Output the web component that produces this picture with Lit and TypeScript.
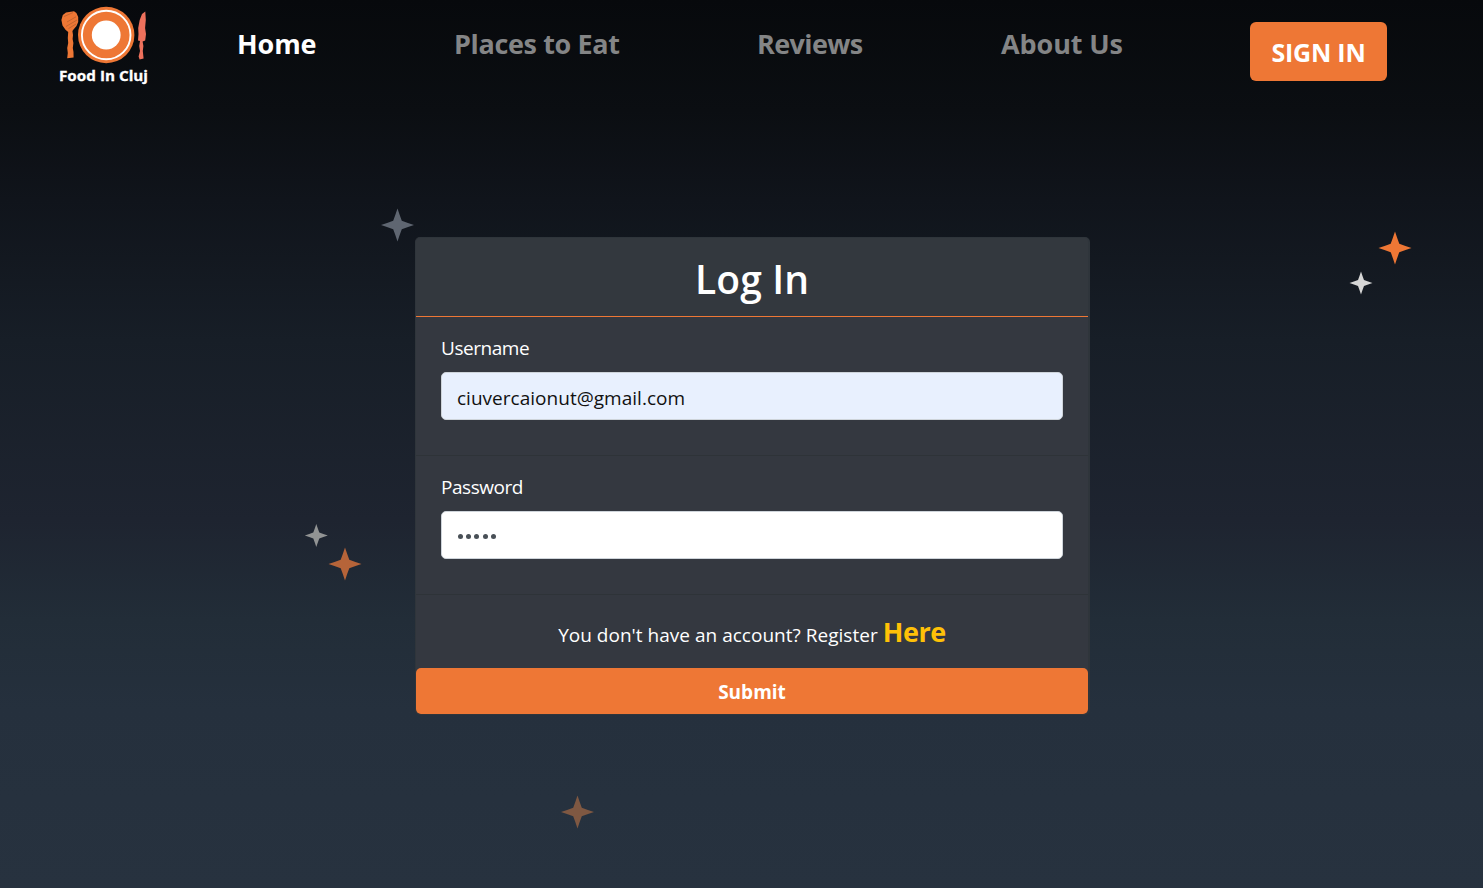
import { LitElement, html, css, svg } from "lit";
import { customElement } from "lit/decorators.js";

interface Star { x: number; y: number; r: number; color: string; }

const STARS: Star[] = [
  { x: 397.5, y: 225, r: 16.5, color: "#5f6671" },
  { x: 1395, y: 248, r: 16.5, color: "#ee7735" },
  { x: 1361, y: 283, r: 11.5, color: "#d6d6d6" },
  { x: 316.3, y: 535.5, r: 11.5, color: "#929494" },
  { x: 345, y: 564, r: 16.5, color: "#b66439" },
  { x: 577.5, y: 812, r: 16.5, color: "#7f5842" },
];

@customElement("food-logo")
export class FoodLogo extends LitElement {
  static styles = css`
    :host { display: block; width: 94px; height: 90px; }
    svg { display: block; }
    .name { font: 700 15px "Open Sans", "Noto Sans", sans-serif; fill: #fff; stroke: #fff; stroke-width: 0.3px; }
  `;
  render() {
    return html`<svg width="94" height="90" viewBox="56 0 94 90" role="img" aria-label="Food In Cluj">
      <circle cx="106.2" cy="35" r="28.2" fill="#ee7735" />
      <circle cx="106.2" cy="35" r="24.3" fill="none" stroke="#fff" stroke-width="1.9" />
      <circle cx="106.2" cy="35" r="14.4" fill="#fff" />
      <path fill="#ee7735" d="M66 12.5 L74 11.2 L76.4 13 L78.2 17 L78.2 22 L76.5 26 L73.5 29.5 L72.4 31 L73 35 L72.6 39 L73.4 43 L72.8 48 L73.5 52 L73.6 57.6 L67.2 58.2 L67.8 53 L67.2 48 L68.2 43 L67.8 38 L68.2 32 L65.5 29.8 L62.5 25.5 L61.4 20 L62.8 15Z" />
      <path fill="none" stroke="#a8592c" stroke-width=".6" d="M64 16.5 L73 12.6 M67 22 L76 16.8 M66 26.5 L77 20 M68.5 28.6 L76 24" />
      <path fill="#ee715c" d="M145.3 11.5 L145.8 20 L145.1 28 L146 34 L145.2 40.5 L142.6 41.4 L143.4 46 L142.8 51 L143.6 58.6 L139.6 59.4 L138.6 56.6 L140 51 L139.2 46 L140 41 L138 40.4 L138.5 34 L138.2 28 L139.7 20 L142 14Z" />
      <text class="name" x="59" y="80.6" textLength="89" lengthAdjust="spacingAndGlyphs">Food In Cluj</text>
    </svg>`;
  }
}

@customElement("login-card")
export class LoginCard extends LitElement {
  static styles = css`
    * { box-sizing: border-box; }
    :host { display: block; width: 675px; color: #fff; }
    .card { display: flex; flex-direction: column; height: 478px; background: #343840; border: 1px solid #2f353b; border-right-width: 2px; border-radius: 5px; overflow: hidden; }
    .title { margin: 0; height: 79px; padding-top: 11px; background: #33383e; border-bottom: 1px solid #ee7735; font-size: 39px; line-height: 60px; font-weight: 600; text-align: center; letter-spacing: 0.1px; }
    .group { height: 139px; padding: 16px 25px 0; border-bottom: 1px solid #2e3338; }
    .label { display: block; height: 39px; font-size: 19px; line-height: 30px; letter-spacing: -0.45px; }
    .input { display: block; width: 622px; height: 48px; padding: 3px 15px 0; border: 1px solid #ced4da; border-radius: 5px; outline: 0; font: 19px "Open Sans", "Noto Sans", sans-serif; letter-spacing: 0.02px; color: #111; background: #fff; }
    .filled { background: #e8f0fe; }
    .secret { display: flex; align-items: center; gap: 3.2px; padding: 3px 16px 0; }
    .dot { width: 5px; height: 5px; border-radius: 50%; background: #495057; }
    .footer { height: 73px; padding-top: 15px; text-align: center; font-size: 19px; line-height: 43px; letter-spacing: 0.02px; white-space: nowrap; }
    .here { color: #ffc107; font-size: 27px; font-weight: 700; letter-spacing: -0.4px; text-decoration: none; }
    .submit { height: 46px; border: 0; border-radius: 5px; padding: 2px 0 0; background: #ee7735; color: #fff; font: 700 19px "Open Sans", "Noto Sans", sans-serif; letter-spacing: 0; }
  `;
  render() {
    return html`<form class="card">
      <h1 class="title">Log In</h1>
      <div class="group">
        <label class="label" for="user">Username</label>
        <input class="input filled" id="user" value="ciuvercaionut@gmail.com" />
      </div>
      <div class="group">
        <span class="label">Password</span>
        <div class="input secret">${[0, 1, 2, 3, 4].map(() => html`<span class="dot"></span>`)}</div>
      </div>
      <div class="footer">You don't have an account? Register <a class="here">Here</a></div>
      <button class="submit" type="button">Submit</button>
    </form>`;
  }
}

@customElement("app-root")
export class AppRoot extends LitElement {
  static styles = css`
    * { box-sizing: border-box; }
    :host { display: block; position: relative; width: 100%; height: 888px; overflow: hidden; background: linear-gradient(#07090c 0, #0b0e12 110px, #10141b 200px, #171e27 340px, #1e2430 520px, #222d38 620px, #25303d 710px, #27323f 888px); font-family: "Open Sans", "Noto Sans", sans-serif; }
    .sky { position: absolute; inset: 0; pointer-events: none; }
    .bar { display: flex; align-items: flex-start; height: 90px; padding-left: 56px; }
    .nav { display: flex; gap: 138px; padding: 22px 0 0 87px; }
    .link { display: block; font-size: 27px; line-height: 44px; font-weight: 700; color: #848586; white-space: nowrap; text-decoration: none; }
    .current { color: #fff; width: 79px; letter-spacing: -0.1px; }
    .places { width: 165px; letter-spacing: -0.37px; }
    .reviews { width: 106px; letter-spacing: -0.6px; }
    .about { width: 122px; letter-spacing: -0.1px; }
    .signin { width: 137px; height: 59px; margin: 22px 0 0 127px; padding: 0; border: 0; border-radius: 6px; background: #ee7735; color: #fff; font: 700 25px "Open Sans", "Noto Sans", sans-serif; letter-spacing: -0.2px; white-space: nowrap; }
    .main { padding: 147px 0 0 415px; }
  `;
  render() {
    return html`
      <svg class="sky" width="1483" height="888" aria-hidden="true">
        ${STARS.map((s) => svg`<path fill=${s.color} transform="translate(${s.x} ${s.y}) scale(${s.r})" d="M0 -1 Q.13 -.6 .26 -.26 Q.6 -.13 1 0 Q.6 .13 .26 .26 Q.13 .6 0 1 Q-.13 .6 -.26 .26 Q-.6 .13 -1 0 Q-.6 -.13 -.26 -.26 Q-.13 -.6 0 -1Z" />`)}
      </svg>
      <header class="bar">
        <food-logo></food-logo>
        <nav class="nav">
          <a class="link current">Home</a>
          <a class="link places">Places to Eat</a>
          <a class="link reviews">Reviews</a>
          <a class="link about">About Us</a>
        </nav>
        <button class="signin">SIGN IN</button>
      </header>
      <main class="main"><login-card></login-card></main>
    `;
  }
}
